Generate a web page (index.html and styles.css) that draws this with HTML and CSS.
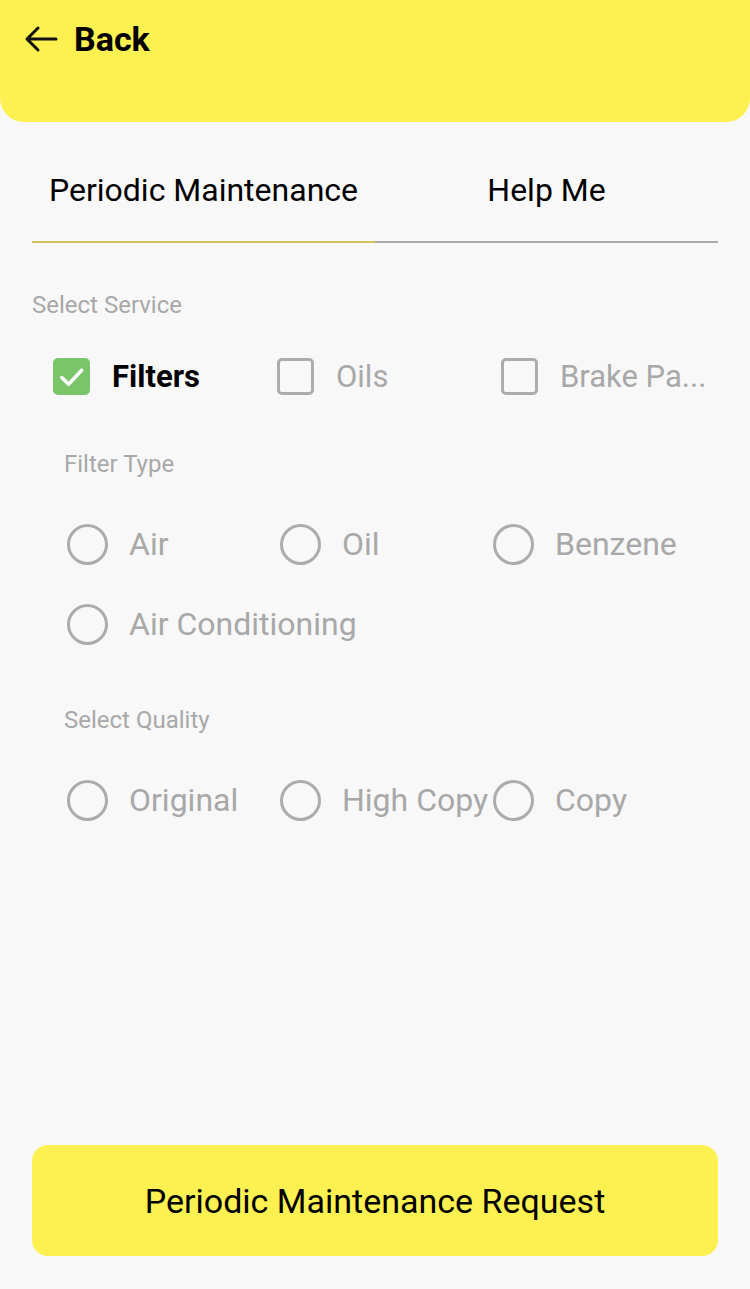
FILE: index.html
```html
<!DOCTYPE html>
<html>
<head>
<meta charset="utf-8">
<link rel="stylesheet" href="styles.css">
</head>
<body>
<header class="topbar">
  <div class="back">
    <svg class="back-icon" width="34" height="28" viewBox="0 0 34 28"><path d="M32 14H3M14 3L3 14L14 25" fill="none" stroke="#111" stroke-width="3" stroke-linecap="round" stroke-linejoin="round"/></svg>
    <span class="back-text">Back</span>
  </div>
</header>
<main class="content">
  <nav class="tabs">
    <div class="tab active">Periodic Maintenance</div>
    <div class="tab">Help Me</div>
  </nav>
  <div class="section-label">Select Service</div>
  <div class="checks">
    <div class="check-item checked">
      <span class="box"><svg width="38" height="38" viewBox="0 0 38 38"><path d="M9 19.5L16 26.5L29.5 12" fill="none" stroke="#fff" stroke-width="3.6" stroke-linecap="round" stroke-linejoin="round"/></svg></span>
      <span class="check-label">Filters</span>
    </div>
    <div class="check-item">
      <span class="box"></span>
      <span class="check-label">Oils</span>
    </div>
    <div class="check-item">
      <span class="box"></span>
      <span class="check-label">Brake Pa...</span>
    </div>
  </div>
  <div class="sub-label">Filter Type</div>
  <div class="radios">
    <div class="radio-item"><span class="circle"></span><span class="radio-label">Air</span></div>
    <div class="radio-item"><span class="circle"></span><span class="radio-label">Oil</span></div>
    <div class="radio-item"><span class="circle"></span><span class="radio-label">Benzene</span></div>
    <div class="radio-item"><span class="circle"></span><span class="radio-label">Air Conditioning</span></div>
  </div>
  <div class="sub-label quality">Select Quality</div>
  <div class="radios">
    <div class="radio-item"><span class="circle"></span><span class="radio-label">Original</span></div>
    <div class="radio-item"><span class="circle"></span><span class="radio-label">High Copy</span></div>
    <div class="radio-item"><span class="circle"></span><span class="radio-label">Copy</span></div>
  </div>
  <div class="spacer"></div>
  <button class="request">Periodic Maintenance Request</button>
</main>
</body>
</html>
```
FILE: styles.css
```css
* { box-sizing: border-box; }
html, body { margin: 0; padding: 0; }
body {
  width: 750px;
  height: 1289px;
  background: #f8f8f8;
  font-family: Roboto, "Liberation Sans", sans-serif;
  display: flex;
  flex-direction: column;
  overflow: hidden;
}
.topbar {
  height: 122px;
  background: #fcf151;
  border-radius: 0 0 24px 24px;
  padding: 21px 0 0 24px;
  flex-shrink: 0;
}
.back {
  display: flex;
  align-items: center;
  gap: 16px;
  height: 36px;
}
.back-icon { display: block; }
.back-text {
  font-size: 34px;
  font-weight: 700;
  color: #000;
}
.content {
  flex: 1;
  display: flex;
  flex-direction: column;
  padding: 0 32px;
}
.tabs {
  display: flex;
  margin-top: 41px;
}
.tab {
  flex: 1;
  text-align: center;
  font-size: 32px;
  line-height: 40px;
  color: #000;
  height: 80px;
  padding-top: 7px;
  border-bottom: 2px solid #ababab;
}
.tab.active { border-bottom-color: #d6c35a; }
.section-label {
  margin-top: 48px;
  font-size: 24px;
  color: #a8a8a8;
  line-height: 28px;
}
.checks {
  display: flex;
  margin-top: 35px;
  padding-left: 21px;
  height: 44px;
  align-items: center;
}
.check-item {
  width: 224px;
  display: flex;
  align-items: center;
  gap: 22px;
  flex-shrink: 0;
}
.box {
  width: 37px;
  height: 37px;
  border: 3px solid #acacac;
  border-radius: 5px;
  flex-shrink: 0;
  display: flex;
}
.box svg { margin: -3px; }
.checked .box {
  background: #7ac46a;
  border-color: #7ac46a;
}
.check-label {
  font-size: 31px;
  color: #a8a8a8;
  white-space: nowrap;
}
.checked .check-label {
  color: #000;
  font-weight: 700;
}
.sub-label {
  margin-top: 52px;
  padding-left: 32px;
  font-size: 24px;
  color: #a8a8a8;
  line-height: 28px;
}
.sub-label.quality { margin-top: 62px; }
.radios {
  display: flex;
  flex-wrap: wrap;
  padding-left: 35px;
  margin-top: 46px;
  row-gap: 40px;
}
.radio-item {
  width: 213px;
  display: flex;
  align-items: center;
  gap: 21px;
  height: 40px;
}
.circle {
  width: 41px;
  height: 41px;
  border: 3px solid #acacac;
  border-radius: 50%;
  flex-shrink: 0;
}
.radio-label {
  font-size: 32px;
  color: #a8a8a8;
  white-space: nowrap;
}
.spacer { flex: 1; }
.request {
  height: 111px;
  margin-bottom: 33px;
  background: #fcf151;
  border: none;
  border-radius: 16px;
  font-family: Roboto, "Liberation Sans", sans-serif;
  font-size: 34px;
  color: #000;
}
```
